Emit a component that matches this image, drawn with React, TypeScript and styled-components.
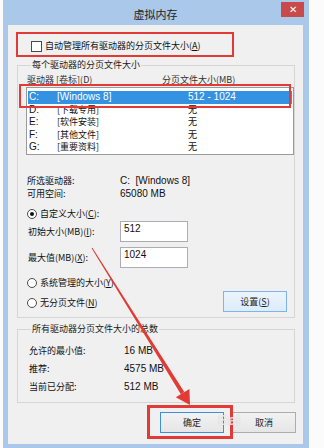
import React from 'react';
import styled, { createGlobalStyle } from 'styled-components';

const cjk = `"Noto Sans CJK SC", "Liberation Sans", sans-serif`;
const latin = `"Liberation Sans", "Noto Sans CJK SC", sans-serif`;

const GlobalStyle = createGlobalStyle`
  html, body {
    margin: 0;
    padding: 0;
    background: #fbfbfb;
  }
  body {
    font-family: ${cjk};
    color: #111;
  }
`;

const Page = styled.div`
  position: relative;
  width: 324px;
  height: 448px;
  padding-left: 3px;
  box-sizing: border-box;
  overflow: hidden;
`;

const Window = styled.div`
  width: 306px;
  height: 448px;
  background: #a9c8ea;
  display: flex;
  flex-direction: column;
  padding: 0 6px 4px 5px;
  box-sizing: border-box;
`;

const TitleBar = styled.div`
  height: 25px;
  flex: none;
  display: grid;
  grid-template-columns: 1fr auto 1fr;
`;

const Title = styled.div`
  grid-column: 2;
  font-size: 11px;
  line-height: 29px;
  color: #222;
`;

const CloseButton = styled.div`
  grid-column: 3;
  justify-self: end;
  margin: 2px -1px 0 0;
  width: 23px;
  height: 15px;
  background: #c94a4a;
  color: #fff;
  font-family: ${latin};
  font-size: 10px;
  line-height: 15px;
  text-align: center;
`;

const Client = styled.div`
  flex: 1;
  background: #f0f0f0;
  padding: 0 8px 0 9px;
  display: flex;
  flex-direction: column;
`;

const Text = styled.span`
  font-family: ${cjk};
  font-size: 9px;
  line-height: 12px;
  white-space: nowrap;
`;

const Value = styled.span`
  font-family: ${latin};
  font-size: 10px;
  line-height: 12px;
  white-space: nowrap;
`;

const CheckRow = styled.label`
  display: flex;
  align-items: center;
  gap: 3px;
  padding: 15px 0 0 14px;
  height: 12px;
`;

const CheckBox = styled.span`
  width: 9px;
  height: 9px;
  border: 1px solid #4a4a4a;
  background: #fff;
`;

const GroupBox = styled.fieldset<{ $top: number; $bottom: number }>`
  margin: ${({ $top }) => $top}px 0 0 0;
  padding: 0 7px ${({ $bottom }) => $bottom}px 9px;
  border: 1px solid #d6d6d6;
  min-width: 0;
`;

const Legend = styled.legend`
  margin-left: 4px;
  padding: 0 1px;
  font-family: ${cjk};
  font-size: 9px;
  line-height: 12px;
  color: #222;
`;

const HeaderRow = styled.div`
  display: grid;
  grid-template-columns: 135px 1fr;
  margin-top: 3px;
  height: 12px;
  color: #333;
`;

const ListBox = styled.div`
  margin-top: 1px;
  margin-left: -1px;
  width: 268px;
  height: 68px;
  box-sizing: border-box;
  border: 1px solid #9a9a9a;
  background: #fff;
  padding-top: 3px;
`;

const DriveRow = styled.div<{ $selected?: boolean }>`
  display: grid;
  grid-template-columns: 28px 131px 1fr;
  align-items: center;
  height: 12.5px;
  margin: 0 1px;
  padding-left: 1px;
  background: ${({ $selected }) => ($selected ? '#3492e2' : 'transparent')};
  color: ${({ $selected }) => ($selected ? '#fff' : '#111')};
`;

const InfoRow = styled.div<{ $labelWidth: number; $height: number }>`
  display: grid;
  grid-template-columns: ${({ $labelWidth }) => $labelWidth}px 1fr;
  align-items: center;
  height: ${({ $height }) => $height}px;
`;

const InfoBlock = styled.div`
  margin-top: 19px;
`;

const RadioRow = styled.label<{ $top: number }>`
  display: flex;
  align-items: center;
  gap: 3px;
  margin-top: ${({ $top }) => $top}px;
  height: 14px;
`;

const Radio = styled.span<{ $checked?: boolean }>`
  width: 8px;
  height: 8px;
  border-radius: 50%;
  border: 1px solid #4a4a4a;
  background: #fff;
  display: grid;
  place-items: center;
  &::after {
    content: '';
    width: 4px;
    height: 4px;
    border-radius: 50%;
    background: ${({ $checked }) => ($checked ? '#111' : 'transparent')};
  }
`;

const FieldRow = styled.div<{ $top: number }>`
  display: grid;
  grid-template-columns: 92px 68px;
  align-items: center;
  margin-top: ${({ $top }) => $top}px;
  padding-left: 1px;
`;

const Input = styled.div`
  height: 21px;
  box-sizing: border-box;
  border: 1px solid #abadb3;
  background: #fff;
  padding: 1px 0 0 3px;
  font-family: ${latin};
  font-size: 10px;
  line-height: 12px;
`;

const ButtonRow = styled.div`
  display: flex;
  justify-content: space-between;
  align-items: center;
  margin-top: 1px;
`;

const Button = styled.div<{ $variant?: 'default' | 'hot' }>`
  width: 64px;
  height: 21px;
  box-sizing: border-box;
  border: 1px solid
    ${({ $variant }) => ($variant === 'hot' ? '#7eb4ea' : $variant === 'default' ? '#3c8fd8' : '#adadad')};
  background: ${({ $variant }) =>
    $variant === 'hot' ? 'linear-gradient(#ecf4fc, #dcecfc)' : 'linear-gradient(#f2f2f2, #e6e6e6)'};
  display: grid;
  place-items: center;
  font-family: ${cjk};
  font-size: 9px;
  color: #222;
`;

const SummaryBlock = styled.div`
  margin-top: 7px;
  padding-left: 2px;
`;

const DialogButtons = styled.div`
  display: flex;
  justify-content: flex-end;
  gap: 8px;
  margin: 9px -1px 0 0;
`;

const Mark = styled.div<{ $x: number; $y: number; $w: number; $h: number; $t: number }>`
  position: absolute;
  left: ${({ $x }) => $x}px;
  top: ${({ $y }) => $y}px;
  width: ${({ $w }) => $w}px;
  height: ${({ $h }) => $h}px;
  box-sizing: border-box;
  border: ${({ $t }) => $t}px solid #e23a34;
  pointer-events: none;
`;

const ArrowLayer = styled.svg`
  position: absolute;
  left: 0;
  top: 0;
  pointer-events: none;
`;

const Watermark = styled.div`
  position: absolute;
  left: 218px;
  top: 411px;
  font-family: ${latin};
  font-size: 15px;
  font-weight: bold;
  color: rgba(255, 255, 255, 0.7);
  text-shadow: 0 0 1px rgba(150, 150, 150, 0.55);
  pointer-events: none;
  letter-spacing: -0.5px;
`;

const drives = [
  { letter: 'C:', label: '[Windows 8]', size: '512 - 1024', selected: true },
  { letter: 'D:', label: '[下载专用]', size: '无' },
  { letter: 'E:', label: '[软件安装]', size: '无' },
  { letter: 'F:', label: '[其他文件]', size: '无' },
  { letter: 'G:', label: '[重要资料]', size: '无' },
];

const summary = [
  ['允许的最小值:', '16 MB'],
  ['推荐:', '4575 MB'],
  ['当前已分配:', '512 MB'],
];

export default function App() {
  return (
    <Page>
      <GlobalStyle />
      <Window>
        <TitleBar>
          <Title>虚拟内存</Title>
          <CloseButton>✕</CloseButton>
        </TitleBar>
        <Client>
          <CheckRow>
            <CheckBox />
            <Text>
              自动管理所有驱动器的分页文件大小(<u>A</u>)
            </Text>
          </CheckRow>

          <GroupBox $top={7} $bottom={5}>
            <Legend>每个驱动器的分页文件大小</Legend>
            <HeaderRow>
              <Text>驱动器 [卷标](D)</Text>
              <Text>分页文件大小(MB)</Text>
            </HeaderRow>
            <ListBox>
              {drives.map((d) => (
                <DriveRow key={d.letter} $selected={d.selected}>
                  <Value>{d.letter}</Value>
                  {d.selected ? <Value>{d.label}</Value> : <Text>{d.label}</Text>}
                  {d.selected ? <Value>{d.size}</Value> : <Text>{d.size}</Text>}
                </DriveRow>
              ))}
            </ListBox>

            <InfoBlock>
              <InfoRow $labelWidth={93} $height={13}>
                <Text>所选驱动器:</Text>
                <Value>C:&nbsp;&nbsp;[Windows 8]</Value>
              </InfoRow>
              <InfoRow $labelWidth={93} $height={13}>
                <Text>可用空间:</Text>
                <Value>65080 MB</Value>
              </InfoRow>
            </InfoBlock>

            <RadioRow $top={7}>
              <Radio $checked />
              <Text>
                自定义大小(<u>C</u>):
              </Text>
            </RadioRow>
            <FieldRow $top={0}>
              <Text>
                初始大小(MB)(<u>I</u>):
              </Text>
              <Input>512</Input>
            </FieldRow>
            <FieldRow $top={5}>
              <Text>
                最大值(MB)(<u>X</u>):
              </Text>
              <Input>1024</Input>
            </FieldRow>
            <RadioRow $top={8}>
              <Radio />
              <Text>
                系统管理的大小(<u>Y</u>)
              </Text>
            </RadioRow>
            <ButtonRow>
              <RadioRow $top={2}>
                <Radio />
                <Text>
                  无分页文件(<u>N</u>)
                </Text>
              </RadioRow>
              <Button $variant="hot">
                <span>
                  设置(<u>S</u>)
                </span>
              </Button>
            </ButtonRow>
          </GroupBox>

          <GroupBox $top={5} $bottom={6}>
            <Legend>所有驱动器分页文件大小的总数</Legend>
            <SummaryBlock>
              {summary.map(([label, value]) => (
                <InfoRow key={label} $labelWidth={95} $height={18}>
                  <Text>{label}</Text>
                  <Value>{value}</Value>
                </InfoRow>
              ))}
            </SummaryBlock>
          </GroupBox>

          <DialogButtons>
            <Button $variant="default">确定</Button>
            <Button>取消</Button>
          </DialogButtons>
        </Client>
      </Window>

      <Mark $x={16} $y={32} $w={218} $h={25} $t={2} />
      <Mark $x={19} $y={84} $w={272} $h={24} $t={2} />
      <Mark $x={147} $y={405} $w={86} $h={34} $t={3} />

      <ArrowLayer width={324} height={448} viewBox="0 0 324 448">
        <polygon points="92.4,247.7 184.3,392.0 180.9,394.2 91.6,248.3" fill="#e23a34" />
        <polygon points="190,405 189.4,388.9 175.8,397.3" fill="#e23a34" />
      </ArrowLayer>

      <Watermark>Bai</Watermark>
    </Page>
  );
}
